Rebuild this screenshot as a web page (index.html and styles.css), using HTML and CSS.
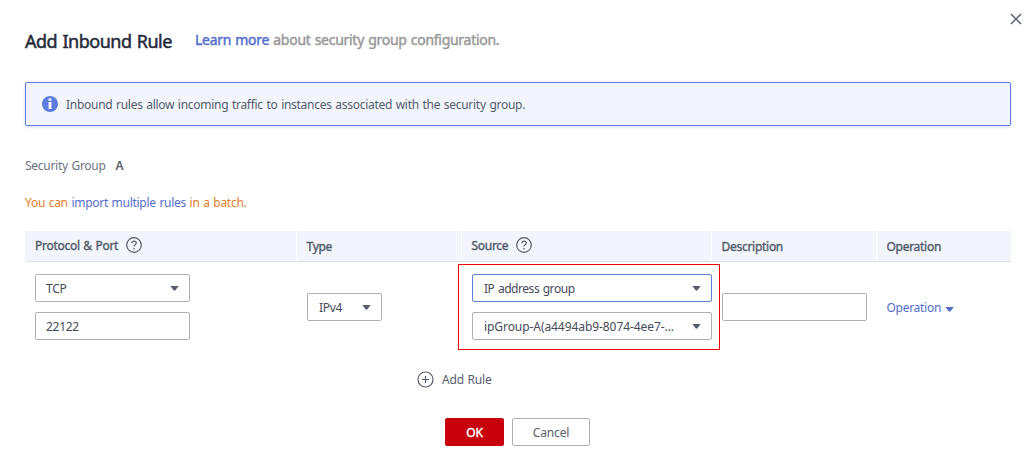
FILE: index.html
```html
<!DOCTYPE html>
<html lang="en">
<head>
<meta charset="utf-8">
<title>Add Inbound Rule</title>
<link rel="stylesheet" href="styles.css">
</head>
<body>
<main class="dialog">
  <button class="close" aria-label="Close"><svg width="12" height="12" viewBox="0 0 12 12"><path d="M1 1l10 10M11 1L1 11"/></svg></button>
  <header class="head">
    <h1 class="title">Add Inbound Rule</h1>
    <p class="hint"><a class="link">Learn more</a> about security group configuration.</p>
  </header>
  <div class="notice">
    <svg class="info" width="16" height="16" viewBox="0 0 16 16"><circle cx="8" cy="8" r="8"/><path d="M6.6 2.6h2.8v2.2H6.600zM6.600 6h2.800v7H6.600z"/></svg>
    <span class="notice-text">Inbound rules allow incoming traffic to instances associated with the security group.</span>
  </div>
  <div class="group"><span class="group-label">Security Group</span><b class="group-name">A</b></div>
  <p class="batch">You can <a class="link">import multiple rules</a> in a batch.</p>
  <section class="table">
    <div class="row row-head">
      <div class="th th-help"><span class="th-text">Protocol &amp; Port</span><svg class="help" width="16" height="16" viewBox="0 0 16 16"><circle cx="8" cy="8" r="7.3"/><path d="M5.800 6.300c0-3 4.500-2.800 4.500-.2C10.300 7.700 8 7.700 8 9.600"/><path d="M8 11v1.400"/></svg></div>
      <div class="th">Type</div>
      <div class="th th-help"><span class="th-text">Source</span><svg class="help" width="16" height="16" viewBox="0 0 16 16"><circle cx="8" cy="8" r="7.3"/><path d="M5.800 6.300c0-3 4.500-2.800 4.500-.2C10.300 7.700 8 7.700 8 9.600"/><path d="M8 11v1.400"/></svg></div>
      <div class="th">Description</div>
      <div class="th">Operation</div>
    </div>
    <div class="row row-body">
      <div class="td">
        <div class="field port"><span class="value">TCP</span><i class="caret"></i></div>
        <div class="field port"><span class="value">22122</span></div>
      </div>
      <div class="td"><div class="field type"><span class="value">IPv4</span><i class="caret"></i></div></div>
      <div class="td">
        <div class="field source active"><span class="value addr">IP address group</span><i class="caret"></i></div>
        <div class="field source"><span class="value ipgroup">ipGroup-A(a4494ab9-8074-4ee7-...</span><i class="caret"></i></div>
        <div class="marker"></div>
      </div>
      <div class="td"><div class="field desc"></div></div>
      <div class="td"><a class="link operation"><span class="value">Operation</span><i class="caret"></i></a></div>
    </div>
  </section>
  <div class="add"><svg class="plus" width="17" height="17" viewBox="0 0 17 17"><circle cx="8.500" cy="8.500" r="7.500"/><path d="M5 8.500h7M8.500 5v7"/></svg><span class="add-text">Add Rule</span></div>
  <footer class="actions"><button class="btn ok">OK</button><button class="btn cancel">Cancel</button></footer>
</main>
</body>
</html>
```
FILE: styles.css
```css
* { box-sizing: border-box; }
body { margin: 0; background: #fff; color: #575d6c; font: 12px/18px "Noto Sans", sans-serif; letter-spacing: -.28px; word-spacing: .8px; }
.dialog { position: relative; width: 1034px; height: 462px; padding: 28px 23px 0 25px; overflow: hidden; white-space: nowrap; }
.close { position: absolute; left: 1010px; top: 13px; width: 12px; height: 12px; padding: 0; border: 0; background: none; }
.close svg { display: block; fill: none; stroke: #575d6c; stroke-width: 1.4; }
.link { color: #526ecc; }
.head { display: flex; height: 54px; }
.title { width: 170px; margin: 0; color: #252b3a; font-size: 18px; line-height: 26px; font-weight: 400; letter-spacing: -.48px; word-spacing: 1px; -webkit-text-stroke: .5px; }
.hint { margin: 0; color: #999; font-size: 14px; line-height: 24px; -webkit-text-stroke: .45px; }
.notice { display: flex; align-items: center; height: 44px; padding: 0 16px; background: #f2f5fc; border: 1px solid #5e7ce0; border-radius: 2px; box-shadow: 0 1px 3px rgba(94, 124, 224, .3); }
.notice-text, .value, .add-text { padding-top: 2px; }
.info { margin-right: 8px; fill: #5e7ce0; }
.info path { fill: #fff; }
.group { display: flex; gap: 10px; margin-top: 31px; color: #6c7280; }
.group-name { color: #575d6c; font-weight: 600; }
.batch { margin: 19px 0 0; color: #e37d29; }
.table { margin-top: 19px; }
.row { display: grid; grid-template-columns: 271px 165px 250px 165px 135px; }
.row-head { height: 31px; }
.th { display: flex; align-items: center; padding: 1px 0 0 9.5px; background: #f2f5fc; border-bottom: 1px solid #dfe1e6; border-left: 1px solid #fff; -webkit-text-stroke: .4px; }
.th:first-child { border-left-color: #f2f5fc; padding-left: 9px; }
.th-help { padding-top: 0; padding-bottom: 2px; }
.th-text { padding-top: 2px; }
.help { margin-left: 8px; fill: none; stroke: #575d6c; stroke-width: 1.2; }
.row-body { height: 90px; align-items: center; }
.td { position: relative; display: grid; gap: 10px; padding-left: 11px; }
.td:first-child { padding-left: 10px; }
.td:last-child { padding-left: 10.5px; }
.field { display: flex; align-items: center; justify-content: space-between; height: 28px; padding: 0 10px; background: #fff; border: 1px solid #adb0b8; border-radius: 2px; color: #454a59; }
.port { width: 155px; }
.type { width: 75px; padding-left: 11px; }
.source { width: 240px; padding-left: 11px; }
.addr { letter-spacing: -.45px; }
.ipgroup { letter-spacing: -.07px; }
.desc { width: 145px; }
.active { border-color: #5e7ce0; }
.caret { width: 9px; height: 5px; background: currentColor; color: #575d6c; clip-path: polygon(0 0, 100% 0, 58% 100%, 42% 100%); }
.marker { position: absolute; left: -3px; top: -10px; width: 262px; height: 86px; border: 1px solid #f00000; }
.operation { display: flex; align-items: center; gap: 4px; }
.operation .caret { margin-top: 4px; color: #526ecc; }
.add { display: flex; align-items: center; gap: 8px; height: 18px; margin: 18px 0 0 392px; letter-spacing: -.2px; }
.plus { fill: none; stroke: #575d6c; stroke-width: 1.2; }
.actions { display: flex; gap: 8px; margin: 30px 0 0 420px; }
.btn { height: 28px; padding: 2px 0 0; border: 1px solid #adb0b8; border-radius: 2px; background: #fff; color: #575d6c; font: 12px/18px "Noto Sans", sans-serif; letter-spacing: -.15px; }
.ok { width: 59px; border-color: #c7000b; background: #c7000b; color: #fff; -webkit-text-stroke: .4px; }
.cancel { width: 78px; }
```
